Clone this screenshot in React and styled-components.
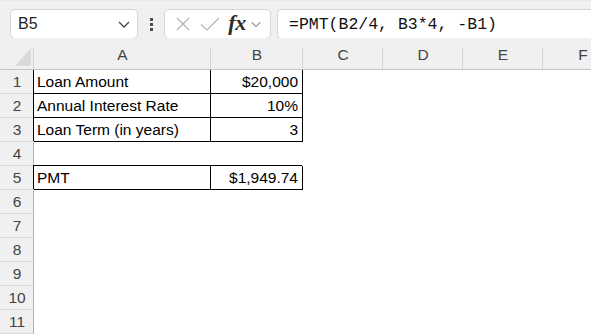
import styled, { createGlobalStyle } from "styled-components";

const Global = createGlobalStyle`
  html, body {
    margin: 0;
    padding: 0;
    background: #ffffff;
  }
  body {
    font-family: "Liberation Sans", Arial, sans-serif;
    width: 591px;
    height: 336px;
    overflow: hidden;
  }
`;

const Page = styled.div`
  width: 591px;
  height: 336px;
  overflow: hidden;
  background: #fff;
`;

const Toolbar = styled.div`
  height: 38px;
  box-sizing: border-box;
  padding: 8px 0 0 10px;
  background: #f0f0f0;
  border-top: 1px solid #e9e9e9;
  display: flex;
  align-items: flex-start;
`;

const Box = styled.div`
  height: 30px;
  box-sizing: border-box;
  background: #fff;
  border: 1px solid #d6d6d6;
  border-radius: 5px;
  display: flex;
  align-items: center;
`;

const NameBox = styled(Box)`
  width: 128px;
  padding: 0 6px 0 7px;
  justify-content: space-between;
  font-size: 16px;
  color: #1f1f1f;
`;

const Dots = styled.div`
  width: 26px;
  height: 30px;
  display: flex;
  flex-direction: column;
  align-items: center;
  justify-content: center;
  gap: 2px;

  span {
    width: 3px;
    height: 3px;
    background: #4a4a4a;
  }
`;

const ButtonsBox = styled(Box)`
  width: 107px;
  padding: 0 4px 0 6px;
  margin-right: 6px;
`;

const IconSlot = styled.div`
  width: ${(p) => p.w}px;
  height: 28px;
  display: flex;
  align-items: center;
  justify-content: center;
`;

const Fx = styled.span`
  font-family: "Liberation Serif", "Times New Roman", serif;
  font-style: italic;
  font-weight: 700;
  font-size: 22px;
  color: #2b2b2b;
  letter-spacing: -0.5px;
  margin-top: -3px;
`;

const FormulaBox = styled(Box)`
  flex: 1;
  border-right: none;
  border-radius: 5px 0 0 5px;
  padding-left: 11px;
  font-family: "Liberation Mono", "Courier New", monospace;
  font-size: 16.5px;
  color: #111;
  white-space: pre;
`;

const Sheet = styled.div`
  display: grid;
  grid-template-columns: 34px 177px 92px 80px 80px 80px 80px;
  grid-template-rows: 32px;
  grid-auto-rows: 24px;
`;

const Corner = styled.div`
  background: #f0f0f0;
  border-bottom: 1px solid #c4c4c4;
  position: relative;

  &::after {
    content: "";
    position: absolute;
    right: 3px;
    bottom: 3px;
    width: 0;
    height: 0;
    border-left: 16px solid transparent;
    border-bottom: 18px solid #dadada;
  }
`;

const ColHead = styled.div`
  background: #f0f0f0;
  border-bottom: 1px solid #c4c4c4;
  position: relative;
  display: flex;
  align-items: flex-end;
  justify-content: center;
  padding-bottom: 5px;
  box-sizing: border-box;
  font-size: 15.5px;
  color: #444;

  &::before {
    content: "";
    position: absolute;
    left: -1px;
    top: 10px;
    bottom: 0;
    width: 1px;
    background: #d4d4d4;
  }
`;

const RowHead = styled.div`
  background: #f0f0f0;
  border-right: 1px solid #b4b4b4;
  border-bottom: 1px solid #d8d8d8;
  box-sizing: border-box;
  display: flex;
  align-items: center;
  justify-content: center;
  font-size: 15.5px;
  color: #444;
  padding-left: 1px;
`;

const Cell = styled.div`
  box-sizing: border-box;
  display: flex;
  align-items: center;
  justify-content: ${(p) => (p.$right ? "flex-end" : "flex-start")};
  padding: 0 4px 0 3px;
  font-size: 15.5px;
  color: #000;
  white-space: nowrap;
  ${(p) =>
    p.$boxed &&
    `
    border-right: 1px solid #000;
    border-bottom: 1px solid #000;
    box-shadow: -1px -1px 0 #000;
  `}
`;

const Chevron = ({ color = "#444", size = 14 }) => (
  <svg width={size} height={size} viewBox="0 0 14 14">
    <path d="M2 5 L7 10 L12 5" fill="none" stroke={color} strokeWidth="1.3" />
  </svg>
);

const cols = ["A", "B", "C", "D", "E", "F"];

const rows = [
  { n: 1, a: "Loan Amount", b: "$20,000", boxed: true },
  { n: 2, a: "Annual Interest Rate", b: "10%", boxed: true },
  { n: 3, a: "Loan Term (in years)", b: "3", boxed: true },
  { n: 4 },
  { n: 5, a: "PMT", b: "$1,949.74", boxed: true },
  { n: 6 },
  { n: 7 },
  { n: 8 },
  { n: 9 },
  { n: 10 },
  { n: 11 },
];

export default function App() {
  return (
    <Page>
      <Global />
      <Toolbar>
        <NameBox>
          <span>B5</span>
          <Chevron />
        </NameBox>
        <Dots>
          <span />
          <span />
          <span />
        </Dots>
        <ButtonsBox>
          <IconSlot w={24}>
            <svg width="16" height="16" viewBox="0 0 16 16">
              <path d="M2 2 L14 14 M14 2 L2 14" stroke="#b3b3b3" strokeWidth="1.2" fill="none" />
            </svg>
          </IconSlot>
          <IconSlot w={30}>
            <svg width="22" height="16" viewBox="0 0 22 16">
              <path d="M2 8.5 L8 14 L20 2" stroke="#b3b3b3" strokeWidth="1.2" fill="none" />
            </svg>
          </IconSlot>
          <IconSlot w={24}>
            <Fx>fx</Fx>
          </IconSlot>
          <IconSlot w={14}>
            <Chevron color="#8a8a8a" size={12} />
          </IconSlot>
        </ButtonsBox>
        <FormulaBox>=PMT(B2/4, B3*4, -B1)</FormulaBox>
      </Toolbar>
      <Sheet>
        <Corner />
        {cols.map((c) => (
          <ColHead key={c}>{c}</ColHead>
        ))}
        {rows.map((r) => (
          <Row key={r.n} r={r} />
        ))}
      </Sheet>
    </Page>
  );
}

function Row({ r }) {
  return (
    <>
      <RowHead>{r.n}</RowHead>
      <Cell $boxed={r.boxed}>{r.a}</Cell>
      <Cell $boxed={r.boxed} $right>
        {r.b}
      </Cell>
      <Cell />
      <Cell />
      <Cell />
      <Cell />
    </>
  );
}
